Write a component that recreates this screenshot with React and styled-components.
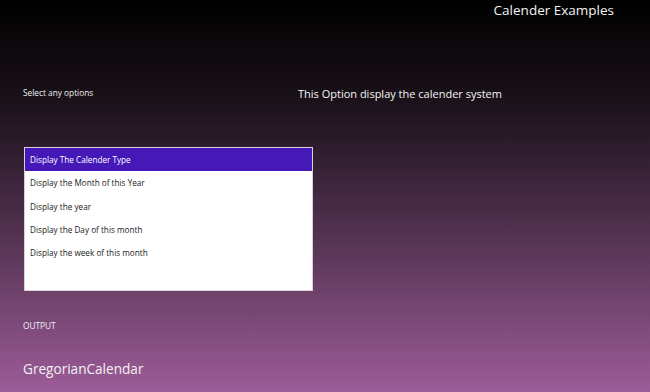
import React, { useState } from "react";
import styled, { createGlobalStyle } from "styled-components";

const options = [
	"Display The Calender Type",
	"Display the Month of this Year",
	"Display the year",
	"Display the Day of this month",
	"Display the week of this month",
];

const GlobalStyle = createGlobalStyle`
	html, body {
		margin: 0;
		padding: 0;
	}
	body {
		font-family: "Open Sans", "Noto Sans", sans-serif;
	}
`;

const App = () => {
	const [selected, setSelected] = useState(0);

	return (
		<>
			<GlobalStyle />
			<Page>
				<Header>
					<Title>Calender Examples</Title>
				</Header>
				<Main>
					<LeftCol>
						<Label>Select any options</Label>
						<ListBox>
							{options.map((opt, i) => (
								<Item key={opt} $active={i === selected} onClick={() => setSelected(i)}>
									{opt}
								</Item>
							))}
						</ListBox>
					</LeftCol>
					<RightCol>
						<Description>This Option display the calender system</Description>
					</RightCol>
				</Main>
				<Output>
					<Label>OUTPUT</Label>
					<Result>GregorianCalendar</Result>
				</Output>
			</Page>
		</>
	);
};

const Page = styled.div`
	width: 650px;
	height: 392px;
	background: linear-gradient(to bottom, #000000 0%, #1a1119 25%, #4a2d48 55%, #9c5c98 100%);
	color: #ffffff;
	display: flex;
	flex-direction: column;
	overflow: hidden;
`;

const Header = styled.header`
	display: flex;
	justify-content: flex-end;
	padding: 1px 36px 0 0;
	height: 19px;
`;

const Title = styled.h1`
	margin: 0;
	font-size: 13.5px;
	font-weight: 400;
	line-height: 18px;
	color: #f2f2f2;
`;

const Main = styled.section`
	display: flex;
	padding: 67px 0 0 23px;
`;

const LeftCol = styled.div`
	width: 275px;
	display: flex;
	flex-direction: column;
`;

const RightCol = styled.div`
	padding: 0;
`;

const Label = styled.div`
	font-size: 8.3px;
	line-height: 12px;
	color: #f0f0f0;
`;

const ListBox = styled.ul`
	list-style: none;
	margin: 48px 0 0 1px;
	padding: 0;
	width: 287px;
	height: 142px;
	background: #ffffff;
	border: 1px solid #d6d0d8;
`;

const Item = styled.li`
	height: 23.3px;
	display: flex;
	align-items: center;
	padding-left: 5px;
	font-size: 8.2px;
	color: ${({ $active }) => ($active ? "#ffffff" : "#1a1a1a")};
	background: ${({ $active }) => ($active ? "#4518b8" : "transparent")};
	cursor: pointer;
`;

const Description = styled.p`
	margin: 0;
	font-size: 11px;
	line-height: 14px;
	color: #f4f4f4;
`;

const Output = styled.section`
	display: flex;
	flex-direction: column;
	padding: 29px 0 0 23px;
	gap: 28px;
`;

const Result = styled.div`
	font-size: 13.6px;
	line-height: 18px;
	color: #f6f0f6;
`;

export default App;
